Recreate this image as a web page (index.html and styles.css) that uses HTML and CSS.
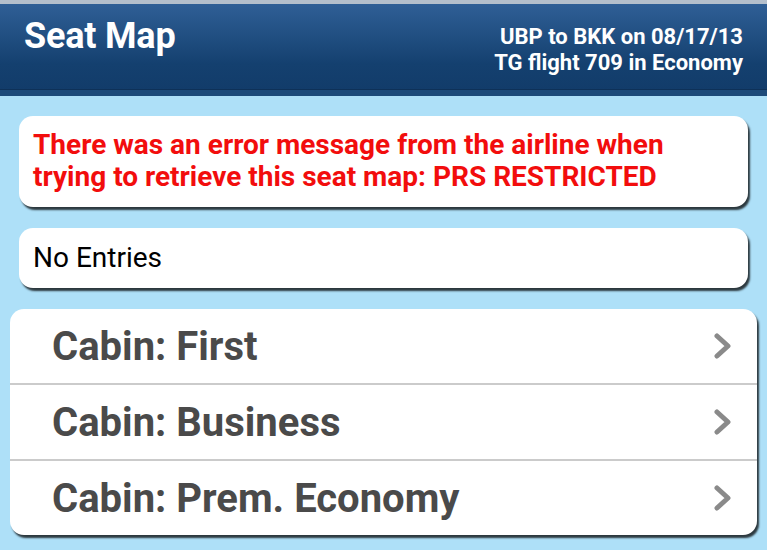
FILE: index.html
```html
<!DOCTYPE html>
<html>
<head>
  <meta charset="UTF-8">
  <title>Seat Map</title>
  <link rel="stylesheet" href="styles.css">
</head>
<body>

  <header class="topbar">
    <h1 class="title">Seat Map</h1>
    <div class="trip">
      <div>UBP to BKK on 08/17/13</div>
      <div>TG flight 709 in Economy</div>
    </div>
  </header>

  <main class="content">
    <div class="card error">
      There was an error message from the airline when trying to retrieve this seat map: PRS RESTRICTED
    </div>

    <div class="card empty">No Entries</div>

    <ul class="cabins">
      <li class="cabin">
        <span>Cabin: First</span>
        <svg class="chev" width="20" height="26" viewBox="0 0 20 26"><path d="M4 3 L15 13 L4 23" /></svg>
      </li>
      <li class="cabin">
        <span>Cabin: Business</span>
        <svg class="chev" width="20" height="26" viewBox="0 0 20 26"><path d="M4 3 L15 13 L4 23" /></svg>
      </li>
      <li class="cabin">
        <span>Cabin: Prem. Economy</span>
        <svg class="chev" width="20" height="26" viewBox="0 0 20 26"><path d="M4 3 L15 13 L4 23" /></svg>
      </li>
    </ul>
  </main>

</body>
</html>
```

FILE: styles.css
```css
* {
  margin: 0;
  padding: 0;
  box-sizing: border-box;
}

body {
  font-family: 'Roboto', 'Liberation Sans', sans-serif;
  background: #aee0f8;
  min-height: 100vh;
}

.topbar {
  height: 96px;
  border-top: 4px solid #b4bfcc;
  background: linear-gradient(#2f5f96, #14406f 70%, #123c6a);
  border-bottom: 6px solid #1d4a79;
  box-shadow: inset 0 -1px 0 #0e3158;
  display: flex;
  justify-content: space-between;
  align-items: flex-start;
  padding: 11px 24px 0 24px;
  color: #fff;
}

.title {
  font-size: 36px;
  font-weight: 700;
  letter-spacing: -0.2px;
  line-height: 42px;
}

.trip {
  text-align: right;
  font-size: 22px;
  font-weight: 700;
  line-height: 26px;
  padding-top: 9px;
}

.content {
  padding: 20px 10px 0 10px;
}

.card {
  background: #fff;
  border-radius: 14px;
  margin: 0 9px 21px 9px;
  box-shadow: 2px 3px 2px rgba(0, 0, 0, 0.75);
  padding: 0 20px 0 14px;
}

.error {
  color: #f20d0d;
  font-weight: 700;
  font-size: 28px;
  line-height: 32px;
  padding-top: 13px;
  height: 91px;
}

.empty {
  height: 60px;
  font-size: 28px;
  line-height: 60px;
  color: #000;
}

.cabins {
  list-style: none;
  background: #fff;
  border-radius: 14px;
  box-shadow: 2px 3px 2px rgba(0, 0, 0, 0.75);
}

.cabin {
  height: 76px;
  display: flex;
  align-items: center;
  justify-content: space-between;
  padding: 0 24px 0 42px;
  font-size: 40px;
  font-weight: 700;
  color: #4a4a4a;
  border-bottom: 2px solid #cbcbcb;
}

.cabin:last-child {
  height: 74px;
  border-bottom: none;
}

.chev path {
  fill: none;
  stroke: #8a8a8a;
  stroke-width: 5;
  stroke-linecap: round;
  stroke-linejoin: round;
}
```
